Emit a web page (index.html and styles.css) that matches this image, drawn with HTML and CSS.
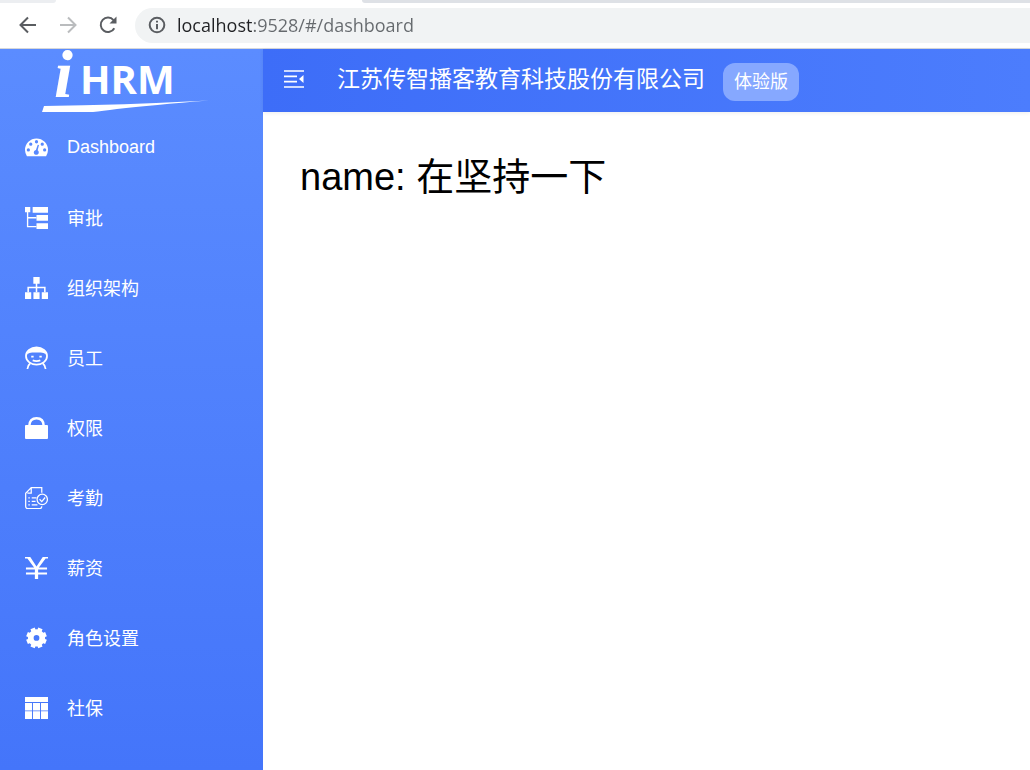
FILE: index.html
```html
<!DOCTYPE html>
<html lang="zh-CN">
<head>
<meta charset="utf-8">
<meta name="viewport" content="width=device-width, initial-scale=1">
<title>Dashboard</title>
<link rel="stylesheet" href="styles.css">
</head>
<body>
<header class="browser">
  <div class="tabs"><span class="tab-edge"></span><span class="tab-active"></span><span class="tab-rest"></span></div>
  <div class="toolbar">
    <button class="tool tool-back" type="button" aria-label="Back">
      <svg width="20" height="20" viewBox="0 0 20 20"><path d="M18 10H3M10 2.500L2.500 10L10 17.500" fill="none" stroke="currentColor" stroke-width="2"/></svg>
    </button>
    <button class="tool tool-forward" type="button" aria-label="Forward">
      <svg width="20" height="20" viewBox="0 0 20 20"><path d="M2 10H17M10 2.500L17.500 10L10 17.500" fill="none" stroke="currentColor" stroke-width="2"/></svg>
    </button>
    <button class="tool" type="button" aria-label="Reload">
      <svg width="20" height="20" viewBox="0 0 20 20"><path d="M16.300 13.200A7.200 7.200 0 1 1 15.500 5.200" fill="none" stroke="currentColor" stroke-width="2"/><path d="M18.500 1.500V8.500H11.500Z" fill="currentColor"/></svg>
    </button>
    <div class="address">
      <svg width="18" height="18" viewBox="0 0 18 18" fill="none" stroke="currentColor" stroke-width="2"><circle cx="9" cy="9" r="7.300"/><path d="M9 8V13.200M9 4.700V6.600"/></svg>
      <input class="url" type="text" aria-label="Address" value="localhost:9528/#/dashboard" spellcheck="false">
    </div>
  </div>
</header>
<div class="app">
  <aside class="sidebar">
    <a class="logo" href="#/">
      <svg width="170" height="63" viewBox="0 0 170 63" fill="#fff" role="img" aria-label="iHRM">
        <text class="logo-i" x="12" y="48">i</text>
        <text class="logo-hrm" x="38" y="45">HRM</text>
        <path d="M2 57Q80 56 167 51.500Q110 56 75 60Q60 62 51 63H0Z"/>
      </svg>
    </a>
    <nav class="menu">
      <a class="item" href="#/dashboard">
        <svg class="icon" viewBox="0 0 24 24"><path fill="currentColor" fill-rule="evenodd" d="M2 21Q0 17.500 0 14.500A12 12 0 0 1 24 14.500Q24 17.500 22 21ZM5.200 14.500a1.700 1.700 0 1 0-3.400 0a1.700 1.700 0 1 0 3.400 0M7.700 8.500a1.700 1.700 0 1 0-3.400 0a1.700 1.700 0 1 0 3.400 0M13.700 6a1.700 1.700 0 1 0-3.400 0a1.700 1.700 0 1 0 3.400 0M19.700 8.500a1.700 1.700 0 1 0-3.400 0a1.700 1.700 0 1 0 3.400 0M22.200 14.500a1.700 1.700 0 1 0-3.400 0a1.700 1.700 0 1 0 3.400 0M13.300 9.200L11.400 14.500A2.600 2.600 0 1 0 13.200 14.900L14.600 9.500Z"/></svg>
        <span>Dashboard</span>
      </a>
      <a class="item" href="#/approvals">
        <svg class="icon" viewBox="0 0 24 24"><path fill="currentColor" d="M0 1H5.500V6.500H0ZM8 1H24V7H8ZM12 9.300H24V15.300H12ZM12 18H24V24H12Z"/><path d="M2.700 6V21.500H12M2.700 12.300H12" fill="none" stroke="currentColor" stroke-width="1.400"/></svg>
        <span>审批</span>
      </a>
      <a class="item" href="#/departments">
        <svg class="icon" viewBox="0 0 24 24"><path fill="currentColor" d="M8.700 1H15.300V8H8.700ZM0 17H6.500V24H0ZM8.800 17H15.200V24H8.800ZM17.500 17H24V24H17.500Z"/><path d="M12 7V17M3.300 17V12H20.700V17" fill="none" stroke="currentColor" stroke-width="1.600"/></svg>
        <span>组织架构</span>
      </a>
      <a class="item" href="#/employees">
        <svg class="icon" viewBox="0 0 24 24" fill="none" stroke="currentColor" stroke-width="1.800"><ellipse cx="12" cy="10.500" rx="11" ry="9"/><path d="M2 8.500Q5 6.500 8 6.700H16Q19 6.500 22 8.500C20.500 3.500 16 1.500 12 1.500S3.500 3.500 2 8.500Z" fill="currentColor" stroke="none"/><path d="M5.500 18Q3 20 2.500 24M18.500 18Q21 20 21.500 24M8 15Q12 16.500 16 15M6.500 11.200H9M15 11.200H17.500"/></svg>
        <span>员工</span>
      </a>
      <a class="item" href="#/permissions">
        <svg class="icon" viewBox="0 0 24 24"><rect y="9.500" width="24" height="14.500" rx="1" fill="currentColor"/><path d="M4.500 10.500C4.500 5 7.500 2.300 12 2.300S19.500 5 19.500 10.500" fill="none" stroke="currentColor" stroke-width="2.600"/></svg>
        <span>权限</span>
      </a>
      <a class="item" href="#/attendance">
        <svg class="icon" viewBox="0 0 24 24" fill="none" stroke="currentColor" stroke-width="1.300"><path d="M17.500 7V1.700H6.500L.700 7.500V21.500Q.700 23.500 2.700 23.500H15.500Q17.500 23.500 17.500 21M6.500 1.700V7.500H2.500"/><path d="M3.500 12.300H5M7 12.300H12M3.500 16H5M7 16H11M3.500 19.700H5M7 19.700H13"/><circle cx="18" cy="14" r="5.400"/><path d="M15.200 13.800L17.500 16.300L21 12"/></svg>
        <span>考勤</span>
      </a>
      <a class="item" href="#/salaries">
        <svg class="icon" viewBox="0 0 24 24"><path d="M0 1H5.500L12 11L18.500 1H24V2.500H21.500L14.500 12H23V14H13.700V17.300H23V19.300H13.700V24H10.300V19.300H1V17.300H10.300V14H1V12H9.500L2.500 2.500H0Z" fill="currentColor"/></svg>
        <span>薪资</span>
      </a>
      <a class="item" href="#/settings">
        <svg class="icon" viewBox="0 0 24 24" fill="none" stroke="currentColor"><circle cx="12" cy="12.500" r="6" stroke-width="6"/><path d="M14.300 7L16.100 2.600M9.700 7L7.900 2.600M17.500 10.200L21.900 8.400M17.500 14.800L21.900 16.600M14.300 18L16.100 22.400M9.700 18L7.900 22.400M6.500 14.800L2.100 16.600M6.500 10.200L2.100 8.400" stroke-width="4.800"/></svg>
        <span>角色设置</span>
      </a>
      <a class="item" href="#/social">
        <svg class="icon" viewBox="0 0 24 24" fill="currentColor"><path d="M0 1H24V6.300H0ZM0 7.300H7.300V15H0ZM8.300 7.300H15.700V15H8.300ZM16.700 7.300H24V15H16.700ZM0 16H7.300V24H0ZM8.300 16H15.700V24H8.300ZM16.700 16H24V24H16.700Z"/></svg>
        <span>社保</span>
      </a>
    </nav>
  </aside>
  <div class="content">
    <header class="navbar">
      <button class="fold" type="button" aria-label="Toggle sidebar">
        <svg width="20" height="18" viewBox="0 0 20 18"><path d="M0 1H20M0 6.300H13M0 11.600H13M0 17H20" fill="none" stroke="currentColor" stroke-width="1.700"/><path d="M19.500 5V13L15 9Z" fill="currentColor"/></svg>
      </button>
      <span class="company">江苏传智播客教育科技股份有限公司</span>
      <span class="badge">体验版</span>
    </header>
    <main class="page">name: 在坚持一下</main>
  </div>
</div>
</body>
</html>
```
FILE: styles.css
```css
* { box-sizing: border-box; }

body {
  display: flex;
  flex-direction: column;
  min-height: 100vh;
  margin: 0;
  background: #fff;
  font-family: "Liberation Sans", "Noto Sans CJK SC", sans-serif;
  font-size: 18px;
}

button {
  display: flex;
  padding: 0;
  border: 0;
  background: none;
  color: inherit;
}

.browser { border-bottom: 1px solid #d5d7da; }

.tabs { display: flex; height: 3px; background: #fff; }
.tab-edge { width: 56px; background: #eceef1; border-bottom-right-radius: 3px; }
.tab-active { width: 306px; }
.tab-rest { flex: 1; background: #dee1e6; border-bottom-left-radius: 3px; }

.toolbar {
  display: flex;
  align-items: center;
  gap: 20px;
  height: 45px;
  padding-bottom: 1px;
  padding-left: 18px;
  color: #5a5d61;
}
.tool-forward { color: #babcbe; }

.address {
  display: flex;
  flex: 1;
  align-items: center;
  gap: 11px;
  height: 35px;
  margin-left: -3px;
  padding-left: 13px;
  border-radius: 18px 0 0 18px;
  background: #f1f3f4;
}
.url {
  flex: 1;
  min-width: 0;
  height: 30px;
  padding: 0;
  border: 0;
  outline: 0;
  background: linear-gradient(90deg, #202124 76px, #65696d 76px);
  background-clip: text;
  color: transparent;
  font-family: "Open Sans", sans-serif;
  font-size: 18px;
}

.app { display: flex; flex: 1; }

.sidebar {
  flex: 0 0 263px;
  background: linear-gradient(#5b8cff, #4475fa);
  color: #fff;
}
.logo { display: flex; height: 63px; padding-left: 42px; }
.logo svg { overflow: visible; }
.logo-i { font: italic bold 68px "Liberation Serif", serif; }
.logo-hrm { font: bold 40px "Open Sans", sans-serif; }

.item {
  display: flex;
  align-items: center;
  gap: 19px;
  height: 70px;
  padding-left: 25px;
  color: #fff;
  text-decoration: none;
}
.icon { width: 23px; height: 23px; }

.content { flex: 1; min-width: 0; }

.navbar {
  display: flex;
  align-items: center;
  height: 63px;
  padding-bottom: 3px;
  padding-left: 21px;
  background: linear-gradient(90deg, #3d6df8, #4c7dfd);
  box-shadow: 0 1px 4px rgba(0, 21, 41, 0.08);
  color: #fff;
  white-space: nowrap;
}
.company { margin-left: 33px; font-size: 23px; line-height: 30px; }
.badge {
  margin-top: 5px;
  margin-left: 18px;
  padding: 0 11px;
  border-radius: 12px;
  background: #86a8ff;
  line-height: 38px;
}

.page {
  padding: 37px;
  color: #000;
  font-size: 38px;
  line-height: 56px;
}
```
